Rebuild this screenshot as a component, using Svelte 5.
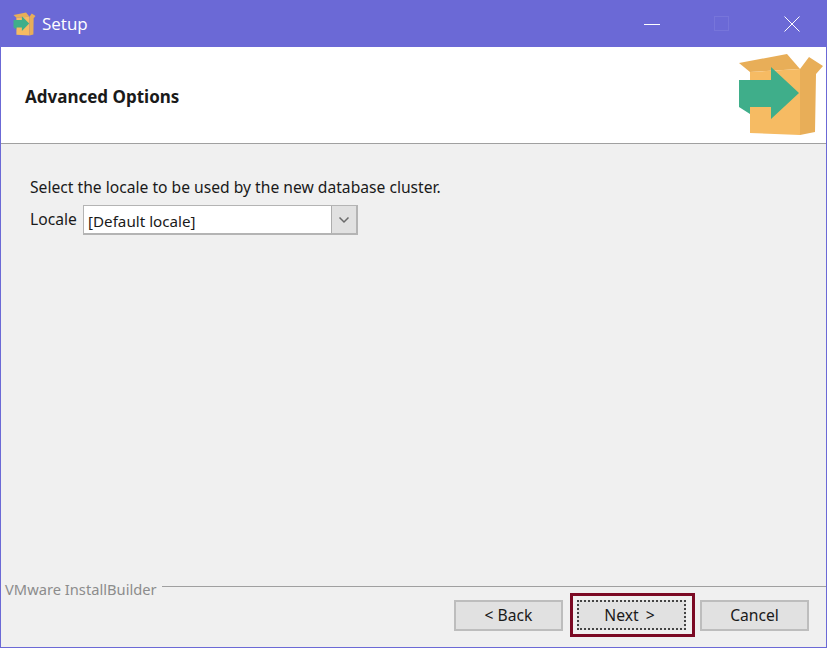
<script lang="ts">
	const buttons = ['< Back', 'Next >', 'Cancel'];
</script>

{#snippet boxIcon(cls: string)}
	<svg class={cls} viewBox="737 52 88 85" preserveAspectRatio="none" aria-hidden="true">
		<polygon points="739,63 787,54 800,69 750,72" fill="#e8ae58" />
		<polygon points="750,72 800,69 800,135 750,133" fill="#f6bb63" />
		<polygon points="800,69 809,57 823,66 816,74 815,132 800,135" fill="#e8ae58" />
		<polygon
			points="739,80 771,80 771,67 799,93 771,119 771,107 750,107 750,114 739,107"
			fill="#3fae8a"
		/>
	</svg>
{/snippet}

<div class="window">
	<header class="titlebar">
		{@render boxIcon('title-icon')}
		<span class="title">Setup</span>
		<div class="controls">
			<svg class="ctl" viewBox="0 0 16 16" aria-hidden="true">
				<line x1="0" y1="8.5" x2="16" y2="8.5" stroke="#fff" />
			</svg>
			<svg class="ctl max" viewBox="0 0 16 16" aria-hidden="true">
				<rect x="0.5" y="0.5" width="14" height="14" fill="none" stroke="#7775da" />
			</svg>
			<svg class="ctl close" viewBox="0 0 16 16" aria-hidden="true">
				<path d="M0.5 0.5 L15.5 15.5 M15.5 0.5 L0.5 15.5" stroke="#fff" fill="none" />
			</svg>
		</div>
	</header>

	<section class="banner">
		<h1>Advanced Options</h1>
		{@render boxIcon('banner-icon')}
	</section>

	<main class="content">
		<p>Select the locale to be used by the new database cluster.</p>
		<div class="field">
			<label for="locale">Locale</label>
			<div class="combo" id="locale">
				<span class="combo-value">[Default locale]</span>
				<span class="combo-btn">
					<svg viewBox="0 0 12 8" aria-hidden="true">
						<path d="M1.5 1.5 L6 6 L10.5 1.5" fill="none" stroke="#6a6a6a" stroke-width="1.5" />
					</svg>
				</span>
			</div>
		</div>
	</main>

	<footer class="footer">
		<div class="brand">
			<span>VMware InstallBuilder</span>
			<i></i>
		</div>
		<div class="actions">
			<button type="button" class="btn">{buttons[0]}</button>
			<div class="highlight">
				<button type="button" class="btn focused">{buttons[1]}</button>
			</div>
			<button type="button" class="btn">{buttons[2]}</button>
		</div>
	</footer>
</div>

<style>
	:global(body) {
		margin: 0;
		background: #f0f0f0;
	}

	.window {
		box-sizing: border-box;
		display: flex;
		flex-direction: column;
		width: 827px;
		height: 648px;
		border: 1px solid #6b69d6;
		border-top: none;
		background: #f0f0f0;
		font-family: 'Noto Sans', sans-serif;
		color: #1a1a1a;
	}

	.titlebar {
		display: flex;
		align-items: center;
		flex: none;
		height: 47px;
		margin: 0 -1px;
		padding-left: 13px;
		background: #6b69d6;
	}

	:global(.title-icon) {
		width: 23px;
		height: 24px;
	}

	.title {
		margin-left: 6px;
		font-family: 'Open Sans', sans-serif;
		font-size: 17px;
		color: #fff;
	}

	.controls {
		display: flex;
		align-items: center;
		margin-left: auto;
		padding-right: 27px;
	}

	.ctl {
		width: 16px;
		height: 16px;
		margin-left: 54px;
	}

	.banner {
		display: flex;
		align-items: center;
		justify-content: space-between;
		flex: none;
		box-sizing: border-box;
		height: 97px;
		padding: 0 1px 0 24px;
		background: #fff;
		border-bottom: 1px solid #a0a0a0;
	}

	h1 {
		margin: 2px 0 0;
		font-size: 17px;
		font-weight: 700;
		color: #1a1a1a;
	}

	:global(.banner-icon) {
		width: 88px;
		height: 85px;
		margin-bottom: 1px;
	}

	.content {
		flex: 1;
		padding: 33px 29px 0;
		font-size: 15.65px;
	}

	p {
		margin: 0;
		line-height: 20px;
	}

	.field {
		display: flex;
		align-items: center;
		gap: 8px;
		margin-top: 8px;
	}

	label {
		flex: none;
		width: 45px;
		margin-top: -3px;
	}

	.combo {
		display: flex;
		box-sizing: border-box;
		width: 275px;
		height: 30px;
		border: 2px solid #b4b4b4;
		border-width: 1px 2px 2px 1px;
		background: #fff;
	}

	.combo-value {
		flex: 1;
		padding: 1px 0 0 4px;
		font-size: 15.2px;
		line-height: 29px;
	}

	.combo-btn {
		display: flex;
		align-items: center;
		justify-content: center;
		width: 24px;
		background: #e1e1e1;
		border-left: 1px solid #adadad;
	}

	.combo-btn svg {
		width: 12px;
		height: 8px;
	}

	.footer {
		flex: none;
		height: 64px;
	}

	.brand {
		display: flex;
		align-items: center;
		height: 6px;
		padding-left: 4px;
		font-size: 14.7px;
		color: #8c8c8c;
	}

	.brand span {
		margin-top: 6px;
	}

	.brand i {
		flex: 1;
		height: 1px;
		margin-left: 5px;
		background: #a0a0a0;
	}

	.actions {
		display: flex;
		align-items: center;
		justify-content: flex-end;
		height: 44px;
		margin-top: 4px;
		padding-right: 17px;
	}

	.btn {
		box-sizing: border-box;
		width: 109px;
		height: 31px;
		padding: 0;
		border: 2px solid #bdbdbd;
		background: #e1e1e1;
		font-family: inherit;
		font-size: 15.65px;
		color: #1a1a1a;
	}

	.highlight {
		display: flex;
		box-sizing: border-box;
		height: 44px;
		margin: 0 5px 0 7px;
		padding: 4px 6px 4px 4px;
		border: 3px solid #7b0a24;
	}

	.focused {
		width: 109px;
		height: 30px;
		padding-right: 4px;
		border: 2px dotted #444;
		word-spacing: 3px;
	}
</style>
